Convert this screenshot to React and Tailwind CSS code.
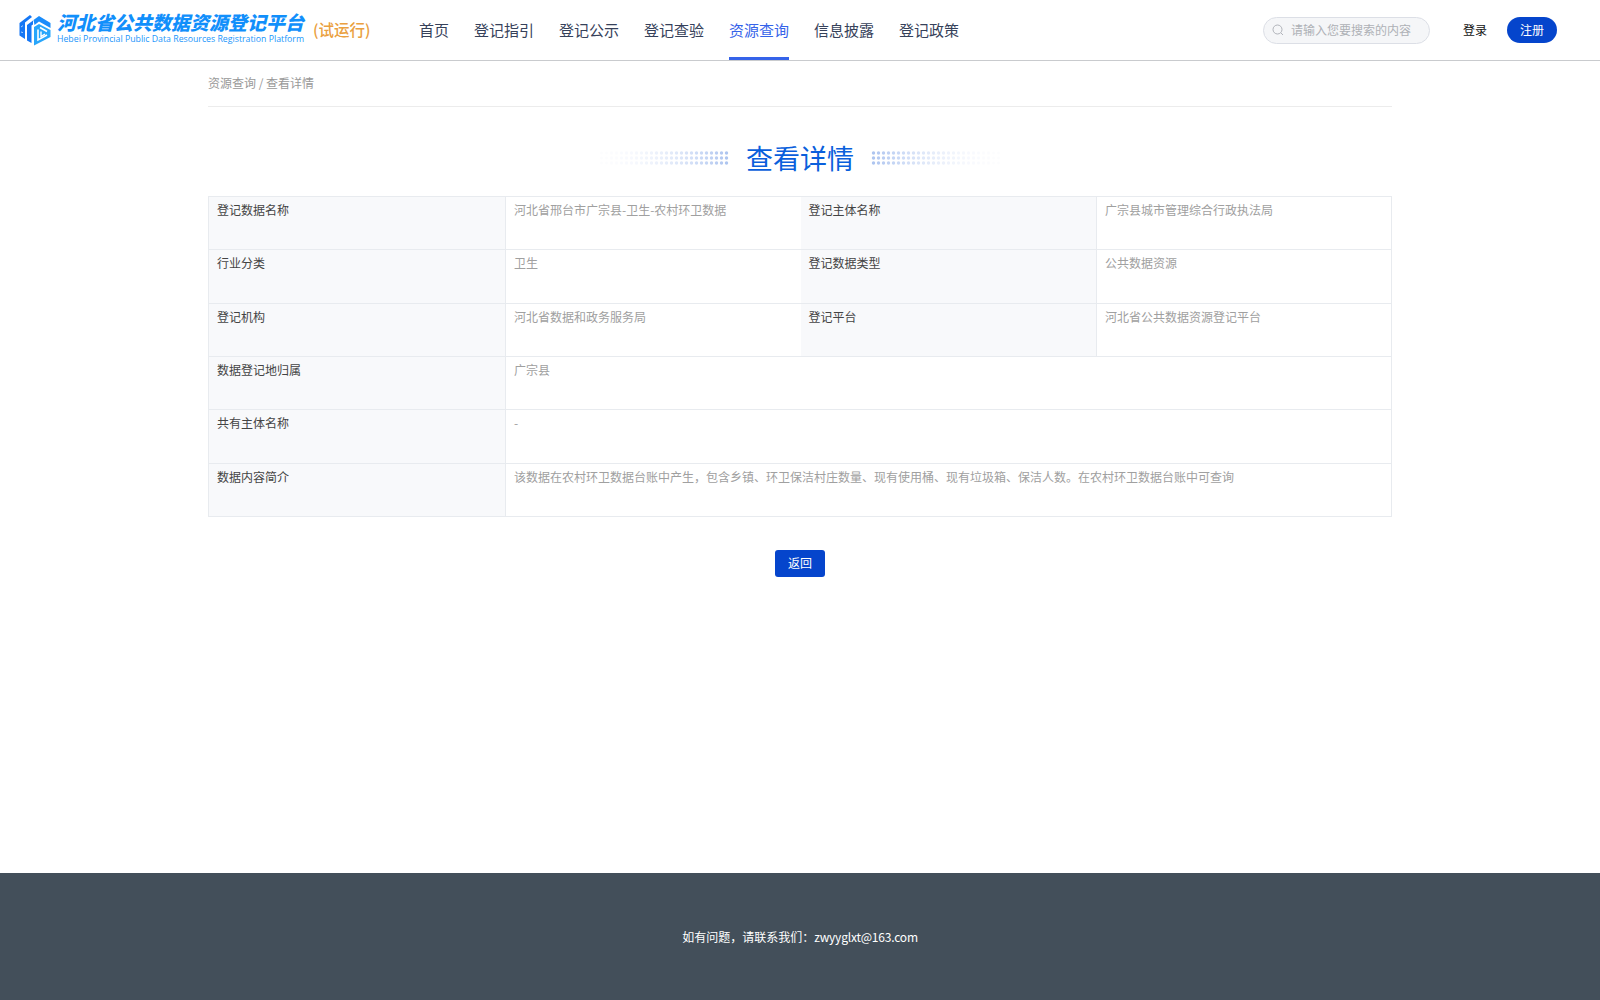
const F = { fontFamily: '"Noto Sans CJK SC", "Liberation Sans", sans-serif' };

function Logo() {
  return (
    <svg width="32" height="32" viewBox="0 0 32 32" className="shrink-0">
      <path d="M0.5 9 L11 1 L13 3 L6 8.5 V25 L0.5 21.5 Z" fill="#1577f5" />
      <path d="M8 11 L14 6.5 V10.5 L12.5 11.5 V29 L8 26.5 Z" fill="#1577f5" />
      <path d="M14.5 6 L20 2 L31.5 9 V14 L20 7.5 L15.5 11 Z" fill="#1a8cfb" />
      <path d="M15 13 L20 10 L31.5 16 V23 L15 31.5 Z" fill="#28a6fb" />
      <path d="M19 15.5 V26 L28 21 M21 13.5 L28 17.5" fill="none" stroke="#fff" strokeWidth="1.6" />
      <path d="M22 17.5 V22.5 L26 20.2" fill="none" stroke="#fff" strokeWidth="1.4" />
      <path d="M2 13 l2 -1.4 M2 18 l2 0.6" stroke="#cfe6ff" strokeWidth="0.8" />
    </svg>
  );
}

function Dots({ dir }) {
  const cols = Array.from({ length: 26 }, (_, i) => i);
  return (
    <svg width="130" height="14" viewBox="0 0 130 14" className="shrink-0">
      {cols.map((c) =>
        [2, 7, 12].map((y) => {
          const t = dir === "left" ? (c + 1) / 26 : 1 - c / 26;
          return (
            <circle key={`${c}-${y}`} cx={c * 5 + 2.5} cy={y} r="1.7" fill="#0a4fd0" opacity={t * t * 0.32 + 0.01} />
          );
        })
      )}
    </svg>
  );
}

const nav = ["首页", "登记指引", "登记公示", "登记查验", "资源查询", "信息披露", "登记政策"];

function Row({ children }) {
  return <tr className="h-[53.33px]">{children}</tr>;
}
function L({ children, noLeft }) {
  return (
    <td className={`align-top px-2 pt-[5px] pb-1 text-xs leading-[16px] text-[#444] bg-[#f8f9fb] border-t border-b border-r border-[#e8ebef] ${noLeft ? "" : "border-l"}`}>
      {children}
    </td>
  );
}
function V({ children, noRight, colSpan }) {
  return (
    <td colSpan={colSpan} className={`align-top px-2 pt-[5px] pb-1 text-xs leading-[16px] text-[#a0a0a0] border-t border-b border-[#e8ebef] ${noRight ? "" : "border-r"}`}>
      {children}
    </td>
  );
}

export default function App() {
  return (
    <div style={F} className="min-h-[1000px] flex flex-col bg-white">
      <header className="h-[61px] flex items-center border-b border-[#c9cbce] pl-[19px] shrink-0">
        <Logo />
        <div className="ml-[6px] mb-[4px] w-[250px] shrink-0">
          <div className="italic font-black text-[19px] leading-[19px] text-[#118ffb] whitespace-nowrap">河北省公共数据资源登记平台</div>
          <div className="text-[8.75px] leading-[10px] mt-[3px] text-[#1a96fb] whitespace-nowrap" style={{ fontFamily: '"Open Sans", sans-serif' }}>Hebei Provincial Public Data Resources Registration Platform</div>
        </div>
        <div className="ml-[6px] text-[15.5px] font-medium text-[#eaa040] whitespace-nowrap w-[59px]">(试运行)</div>
        <nav className="ml-[47px] flex gap-[25px] h-[60px]">
          {nav.map((n) => (
            <a key={n} className={`text-[15px] leading-[60px] h-[60px] border-b-[3px] whitespace-nowrap ${n === "资源查询" ? "text-[#3563e9] border-[#3563e9]" : "text-[#36415a] border-transparent"}`}>{n}</a>
          ))}
        </nav>
        <div className="ml-auto flex items-center pr-[43px]">
          <div className="w-[167px] h-[27px] rounded-full border border-[#dcdfe6] bg-[#f5f6f8] flex items-center pl-[8px] text-xs text-[#aeb1b6]">
            <svg width="12" height="12" viewBox="0 0 12 12" fill="none" stroke="#a8abb2" strokeWidth="0.9"><circle cx="5.5" cy="5.5" r="4.5" /><path d="M9 9l2 2" /></svg>
            <span className="ml-[7px]">请输入您要搜索的内容</span>
          </div>
          <span className="ml-[33px] text-xs text-[#111]">登录</span>
          <span className="ml-[20px] w-[50px] h-[26px] rounded-full bg-[#0545cc] text-white text-xs flex items-center justify-center">注册</span>
        </div>
      </header>

      <main className="flex-1 w-[1184px] mx-auto">
        <div className="h-[46px] pb-[2px] flex items-center border-b border-[#ececec] text-xs text-[#999]">资源查询 / 查看详情</div>
        <div className="h-[89px] pt-[13px] flex items-center justify-center">
          <Dots dir="left" />
          <h1 className="mx-[17px] text-[27px] leading-[36px] text-[#0a5fdc] whitespace-nowrap">查看详情</h1>
          <Dots dir="right" />
        </div>
        <table className="w-[1183px] table-fixed border-collapse">
          <colgroup>
            <col className="w-[297px]" />
            <col className="w-[295px]" />
            <col className="w-[296px]" />
            <col className="w-[295px]" />
          </colgroup>
          <tbody>
            <Row><L>登记数据名称</L><V noRight>河北省邢台市广宗县-卫生-农村环卫数据</V><L noLeft>登记主体名称</L><V>广宗县城市管理综合行政执法局</V></Row>
            <Row><L>行业分类</L><V noRight>卫生</V><L noLeft>登记数据类型</L><V>公共数据资源</V></Row>
            <Row><L>登记机构</L><V noRight>河北省数据和政务服务局</V><L noLeft>登记平台</L><V>河北省公共数据资源登记平台</V></Row>
            <Row><L>数据登记地归属</L><V colSpan={3}>广宗县</V></Row>
            <Row><L>共有主体名称</L><V colSpan={3}>-</V></Row>
            <Row><L>数据内容简介</L><V colSpan={3}>该数据在农村环卫数据台账中产生，包含乡镇、环卫保洁村庄数量、现有使用桶、现有垃圾箱、保洁人数。在农村环卫数据台账中可查询</V></Row>
          </tbody>
        </table>
        <div className="mt-[33px] flex justify-center">
          <button className="w-[50px] h-[27px] rounded-[3px] bg-[#0545cc] text-white text-xs">返回</button>
        </div>
      </main>

      <footer className="h-[127px] bg-[#434f5a] flex items-center justify-center text-xs text-white shrink-0">
        <span>如有问题，请联系我们：<span className="tracking-[-0.2px]">zwyyglxt@163.com</span></span>
      </footer>
    </div>
  );
}
